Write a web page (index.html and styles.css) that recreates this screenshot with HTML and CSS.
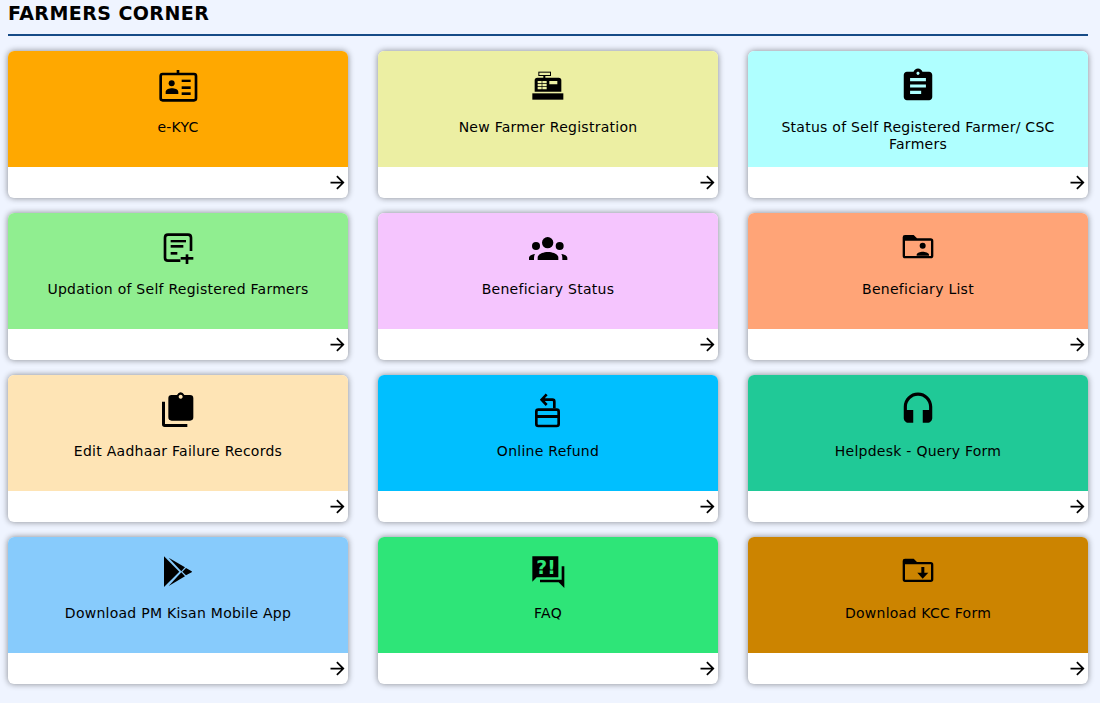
FILE: index.html
```html
<!DOCTYPE html>
<html lang="en">
<head>
<meta charset="utf-8">
<title>Farmers Corner</title>
<link rel="stylesheet" href="styles.css">
</head>
<body>
<main class="page">
  <h2 class="heading">FARMERS CORNER</h2>
  <div class="grid">
    <a class="card" href="#">
      <div class="card-top c-orange">
        <svg class="icon" viewBox="474 198 120 120"><rect x="482" y="222" width="106" height="79" rx="6" class="line8"/><rect x="530" y="210" width="8" height="12"/><circle cx="515" cy="250" r="9"/><path d="M497 282v-6c0-8 12-11 19-11s19 3 19 11v6z"/><rect x="545" y="239" width="27" height="7"/><rect x="545" y="259" width="27" height="8"/><rect x="545" y="277" width="27" height="8"/></svg>
        <p class="label">e-KYC</p>
      </div>
      <div class="card-foot"><svg class="arrow" viewBox="0 0 24 24"><path d="M12 4l-1.41 1.41L16.17 11H4v2h12.17l-5.58 5.59L12 20l8-8z"/></svg></div>
    </a>
    <a class="card" href="#">
      <div class="card-top c-khaki">
        <svg class="icon" viewBox="84 18 120 120"><rect x="116.500" y="36.500" width="35" height="10" class="line3"/><rect x="130" y="47" width="6" height="7"/><path fill-rule="evenodd" d="M112 53h64q8 0 8 8v34h-80V61q0-8 8-8zM113 63v7h12v-7zM127 63v7h13v-7zM113 72v7h12v-7zM127 72v7h13v-7zM113 81v7h12v-7zM127 81v7h13v-7zM148 63v10h24V63z"/><rect x="97" y="100" width="93" height="19"/></svg>
        <p class="label">New Farmer Registration</p>
      </div>
      <div class="card-foot"><svg class="arrow" viewBox="0 0 24 24"><path d="M12 4l-1.41 1.41L16.17 11H4v2h12.17l-5.58 5.59L12 20l8-8z"/></svg></div>
    </a>
    <a class="card" href="#">
      <div class="card-top c-aqua">
        <svg class="icon" viewBox="-0.63 -0.63 25.26 25.26"><path d="M19 3h-4.18C14.4 1.84 13.3 1 12 1c-1.3 0-2.4.84-2.82 2H5c-1.1 0-2 .9-2 2v14c0 1.1.9 2 2 2h14c1.1 0 2-.9 2-2V5c0-1.1-.9-2-2-2zm-7 0c.55 0 1 .45 1 1s-.45 1-1 1-1-.45-1-1 .45-1 1-1zm2 14H7v-2h7v2zm3-4H7v-2h10v2zm0-4H7V7h10v2z"/></svg>
        <p class="label">Status of Self Registered Farmer/ CSC Farmers</p>
      </div>
      <div class="card-foot"><svg class="arrow" viewBox="0 0 24 24"><path d="M12 4l-1.41 1.41L16.17 11H4v2h12.17l-5.58 5.59L12 20l8-8z"/></svg></div>
    </a>

    <a class="card" href="#">
      <div class="card-top c-green">
        <svg class="icon" viewBox="54 9 120 120"><path d="M153 78V38q0-9-9-9H84q-9 0-9 9v60q0 9 9 9h37" class="line8"/><rect x="92" y="45" width="46" height="7"/><rect x="92" y="60" width="38" height="8"/><rect x="92" y="81" width="20" height="8"/><rect x="122" y="96" width="38" height="8"/><rect x="137" y="88" width="8" height="29"/></svg>
        <p class="label">Updation of Self Registered Farmers</p>
      </div>
      <div class="card-foot"><svg class="arrow" viewBox="0 0 24 24"><path d="M12 4l-1.41 1.41L16.17 11H4v2h12.17l-5.58 5.59L12 20l8-8z"/></svg></div>
    </a>
    <a class="card" href="#">
      <div class="card-top c-pink">
        <svg class="icon" viewBox="54 9 120 120"><circle cx="113" cy="53" r="17"/><circle cx="78" cy="63" r="12"/><circle cx="149" cy="63" r="12"/><path d="M83 105V98c0-10 15-17 31-17s31 7 31 17v7z"/><path d="M57 105v-6c0-6 8-11 18-12-2 3-3 7-3 12v6z"/><path d="M172 105v-6c0-6-8-11-18-12 2 3 3 7 3 12v6z"/></svg>
        <p class="label">Beneficiary Status</p>
      </div>
      <div class="card-foot"><svg class="arrow" viewBox="0 0 24 24"><path d="M12 4l-1.41 1.41L16.17 11H4v2h12.17l-5.58 5.59L12 20l8-8z"/></svg></div>
    </a>
    <a class="card" href="#">
      <div class="card-top c-salmon">
        <svg class="icon" viewBox="54 9 120 120"><path fill-rule="evenodd" d="M75 30h26l10 10h41q8 0 8 8v44q0 8-8 8H75q-7 0-7-8V37q0-7 7-7zM75 47v46h78V47z"/><circle cx="128" cy="62" r="9"/><path d="M110 92v-3c0-6 11-9 18-9s19 3 19 9v3z"/></svg>
        <p class="label">Beneficiary List</p>
      </div>
      <div class="card-foot"><svg class="arrow" viewBox="0 0 24 24"><path d="M12 4l-1.41 1.41L16.17 11H4v2h12.17l-5.58 5.59L12 20l8-8z"/></svg></div>
    </a>

    <a class="card" href="#">
      <div class="card-top c-moccasin">
        <svg class="icon" viewBox="54 15 120 120"><path fill-rule="evenodd" d="M95 30h16q4-8 11-8t11 8h17q10 0 10 10v57q0 10-10 10H95q-10 0-10-10V40q0-10 10-10zM122 29a6 6 0 1 0 .01 0z"/><path d="M66 50h9v67h67v9H74q-8 0-8-8z"/></svg>
        <p class="label">Edit Aadhaar Failure Records</p>
      </div>
      <div class="card-foot"><svg class="arrow" viewBox="0 0 24 24"><path d="M12 4l-1.41 1.41L16.17 11H4v2h12.17l-5.58 5.59L12 20l8-8z"/></svg></div>
    </a>
    <a class="card" href="#">
      <div class="card-top c-sky">
        <svg class="icon" viewBox="54 15 120 120"><path d="M110 28L95 44l15 16M95 44h32q6 0 6 6v20" class="line8"/><rect x="79" y="74" width="67" height="49" rx="6" class="line8"/><rect x="78" y="90" width="69" height="9"/></svg>
        <p class="label">Online Refund</p>
      </div>
      <div class="card-foot"><svg class="arrow" viewBox="0 0 24 24"><path d="M12 4l-1.41 1.41L16.17 11H4v2h12.17l-5.58 5.59L12 20l8-8z"/></svg></div>
    </a>
    <a class="card" href="#">
      <div class="card-top c-teal">
        <svg class="icon" viewBox="-0.63 -0.63 25.26 25.26"><path d="M12 1c-4.97 0-9 4.03-9 9v7c0 1.66 1.34 3 3 3h3v-8H5v-2c0-3.87 3.13-7 7-7s7 3.13 7 7v2h-4v8h3c1.66 0 3-1.34 3-3v-7c0-4.97-4.03-9-9-9z"/></svg>
        <p class="label">Helpdesk - Query Form</p>
      </div>
      <div class="card-foot"><svg class="arrow" viewBox="0 0 24 24"><path d="M12 4l-1.41 1.41L16.17 11H4v2h12.17l-5.58 5.59L12 20l8-8z"/></svg></div>
    </a>

    <a class="card" href="#">
      <div class="card-top c-lightblue">
        <svg class="icon" viewBox="54 12 120 120"><path d="M72 25l46 46-46 46z"/><path d="M86 29l49 29-11 12z"/><path d="M86 114l49-29-11-12z"/><path d="M138 60l17 10q2 2 0 3l-17 9-11-11z"/></svg>
        <p class="label">Download PM Kisan Mobile App</p>
      </div>
      <div class="card-foot"><svg class="arrow" viewBox="0 0 24 24"><path d="M12 4l-1.41 1.41L16.17 11H4v2h12.17l-5.58 5.59L12 20l8-8z"/></svg></div>
    </a>
    <a class="card" href="#">
      <div class="card-top c-mint">
        <svg class="icon" viewBox="54 12 120 120"><path d="M67 25h78v63H80l-13 13z"/><text x="108" y="78" class="faq-mark">?!</text><path d="M155 55h8v65l-17-17H90v-8h65z"/></svg>
        <p class="label">FAQ</p>
      </div>
      <div class="card-foot"><svg class="arrow" viewBox="0 0 24 24"><path d="M12 4l-1.41 1.41L16.17 11H4v2h12.17l-5.58 5.59L12 20l8-8z"/></svg></div>
    </a>
    <a class="card" href="#">
      <div class="card-top c-brown">
        <svg class="icon" viewBox="54 12 120 120"><path fill-rule="evenodd" d="M75 32h26l10 10h41q8 0 8 8v44q0 8-8 8H75q-7 0-7-8V39q0-7 7-7zM75 49v46h78V49z"/><rect x="124" y="57" width="9" height="18"/><path d="M112 74h33L128 92z"/></svg>
        <p class="label">Download KCC Form</p>
      </div>
      <div class="card-foot"><svg class="arrow" viewBox="0 0 24 24"><path d="M12 4l-1.41 1.41L16.17 11H4v2h12.17l-5.58 5.59L12 20l8-8z"/></svg></div>
    </a>
  </div>
</main>
</body>
</html>
```

FILE: styles.css
```css
* {
  box-sizing: border-box;
}

html,
body {
  margin: 0;
  padding: 0;
  background: #eff4ff;
}

body {
  font-family: "DejaVu Sans", Verdana, sans-serif;
  color: #000;
}

.page {
  padding: 0 12px 19px 8px;
}

.heading {
  margin: 0 0 15px;
  height: 36px;
  padding-top: 1px;
  border-bottom: 2px solid #164b87;
  font-size: 19px;
  line-height: 24px;
  font-weight: 700;
  letter-spacing: 0.43px;
}

.grid {
  display: grid;
  grid-template-columns: repeat(3, 340px);
  column-gap: 30px;
  row-gap: 15px;
}

.card {
  display: block;
  height: 147px;
  border-radius: 6px;
  overflow: hidden;
  background: #fff;
  color: #000;
  text-decoration: none;
  box-shadow: 0 0 6px rgba(0, 0, 0, 0.45);
}

.card-top {
  height: 116px;
  padding: 15px 20px 0;
  text-align: center;
}

.icon {
  display: block;
  width: 40px;
  height: 40px;
  margin: 0 auto;
  fill: #000;
}

.line8 {
  fill: none;
  stroke: #000;
  stroke-width: 8;
}

.line3 {
  fill: none;
  stroke: #000;
  stroke-width: 3;
}

.faq-mark {
  font-family: "DejaVu Sans", sans-serif;
  font-weight: 700;
  font-size: 56px;
  text-anchor: middle;
  fill: #2ee578;
}

.label {
  margin: 13px 0 0;
  font-size: 14px;
  line-height: 17px;
  letter-spacing: 0.26px;
}

.card-foot {
  display: flex;
  justify-content: flex-end;
  height: 31px;
  padding: 5px 0 0 0;
}

.arrow {
  display: block;
  width: 21px;
  height: 21px;
  fill: #000;
}

.c-orange { background: #ffa800; }
.c-khaki { background: #ecefa3; }
.c-aqua { background: #afffff; }
.c-green { background: #90ee90; }
.c-pink { background: #f5c5fe; }
.c-salmon { background: #ffa477; }
.c-moccasin { background: #fee4b5; }
.c-sky { background: #00bfff; }
.c-teal { background: #20c997; }
.c-lightblue { background: #87cbfc; }
.c-mint { background: #2ee578; }
.c-brown { background: #cc8400; }
```
